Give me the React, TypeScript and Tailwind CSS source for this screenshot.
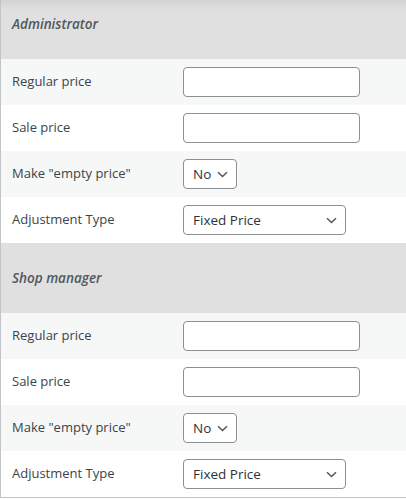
const roles = ["Administrator", "Shop manager"];

function TextInput() {
  return (
    <input
      type="text"
      className="h-[30px] w-[177px] rounded-[4px] border border-[#8c8f94] bg-white px-2 text-[13px] outline-none"
    />
  );
}

function Chevron() {
  return (
    <svg width="11" height="7" viewBox="0 0 11 7" fill="none" className="text-[#50575e]">
      <path d="M1 1.2l4.5 4.3 4.5-4.3" stroke="currentColor" strokeWidth="1.5" />
    </svg>
  );
}

function Select({ value, width }: { value: string; width: string }) {
  return (
    <div
      className={`flex h-[30px] items-center justify-between rounded-[4px] border border-[#8c8f94] bg-white pl-[9px] pr-[8px] text-[13.5px] text-[#2c3338] ${width}`}
    >
      <span>{value}</span>
      <Chevron />
    </div>
  );
}

function Row({ label, shaded, children }: { label: string; shaded: boolean; children: React.ReactNode }) {
  return (
    <div className={`flex h-[46px] items-center ${shaded ? "bg-[#f6f7f7]" : "bg-white"}`}>
      <div className="w-[182px] shrink-0 pl-[11px] text-[13px] text-[#3c434a]">{label}</div>
      {children}
    </div>
  );
}

export default function App() {
  return (
    <div
      className="h-[499px] w-[406px] overflow-hidden bg-white"
      style={{ fontFamily: '"Open Sans", "Noto Sans", sans-serif' }}
    >
      <div className="-mt-[11px] border-b border-l border-[#c3c4c7]">
        {roles.map((role, i) => (
          <div key={role}>
            <div
              className={`flex h-[70px] items-center bg-[#e0e0e0] pl-[11px] text-[13.5px] font-semibold italic text-[#50575e] ${
                i === 0 ? "bg-gradient-to-b from-[#c4c4c4] via-[#e0e0e0] via-30% to-[#e0e0e0]" : ""
              }`}
            >
              {role}
            </div>
            <Row label="Regular price" shaded>
              <TextInput />
            </Row>
            <Row label="Sale price" shaded={false}>
              <TextInput />
            </Row>
            <Row label={'Make "empty price"'} shaded>
              <Select value="No" width="w-[54px]" />
            </Row>
            <Row label="Adjustment Type" shaded={false}>
              <Select value="Fixed Price" width="w-[163px]" />
            </Row>
          </div>
        ))}
      </div>
    </div>
  );
}
